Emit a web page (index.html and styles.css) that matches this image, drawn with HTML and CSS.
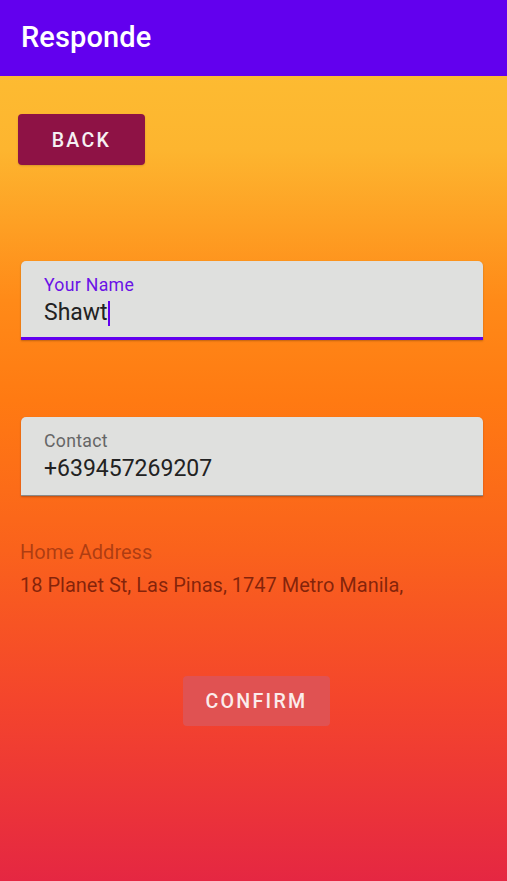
FILE: index.html
```html
<!DOCTYPE html>
<html>
<head>
<meta charset="utf-8">
<link rel="stylesheet" href="styles.css">
</head>
<body>
<header class="appbar"><h1 class="title">Responde</h1></header>
<main class="content">
  <button class="btn-back">BACK</button>
  <div class="field field-focused">
    <span class="field-label label-focused">Your Name</span>
    <span class="field-value">Shawt<span class="cursor"></span></span>
  </div>
  <div class="field field-idle">
    <span class="field-label">Contact</span>
    <span class="field-value">+639457269207</span>
  </div>
  <div class="address">
    <span class="address-label">Home Address</span>
    <span class="address-value">18 Planet St, Las Pinas, 1747 Metro Manila,</span>
  </div>
  <div class="confirm-row"><button class="btn-confirm">CONFIRM</button></div>
</main>
</body>
</html>
```
FILE: styles.css
```css
html, body {
  margin: 0;
  padding: 0;
  height: 100%;
}
body {
  font-family: Roboto, "Noto Sans", sans-serif;
  background: linear-gradient(to bottom, #fdc134 0px, #fdb52f 150px, #ff8a18 300px, #ff7a12 400px, #fa621c 550px, #f4452c 700px, #e52742 881px);
  min-height: 881px;
  display: flex;
  flex-direction: column;
}
.appbar {
  height: 76px;
  background: #6200ee;
  display: flex;
  align-items: center;
  padding-left: 21px;
  flex-shrink: 0;
}
.title {
  margin: 0;
  color: #ffffff;
  font-size: 29px;
  font-weight: 500;
  letter-spacing: 0.1px;
  position: relative;
  top: -1px;
}
.content {
  display: flex;
  flex-direction: column;
  align-items: flex-start;
  padding: 38px 24px 0 18px;
}
.btn-back {
  width: 127px;
  height: 51px;
  border: none;
  border-radius: 4px;
  background: #8e1245;
  color: #f6f0f3;
  font-family: Roboto, sans-serif;
  font-size: 19.6px;
  font-weight: 500;
  letter-spacing: 2.3px;
  padding: 1px 0 0 0;
  box-shadow: 0 1px 2px rgba(0,0,0,0.15);
}
.field {
  margin-left: 3px;
  width: 462px;
  height: 79px;
  box-sizing: border-box;
  background: #dfe0de;
  border-radius: 5px 5px 0 0;
  padding: 13px 0 0 23px;
  display: flex;
  flex-direction: column;
  box-shadow: 0 1px 2px rgba(0,0,0,0.25);
}
.field-focused {
  margin-top: 96px;
  border-bottom: 3px solid #6200ee;
}
.field-idle {
  margin-top: 77px;
  border-bottom: 1px solid #8a8a8a;
}
.field-label {
  font-size: 17.7px;
  line-height: 22px;
  color: #666666;
  letter-spacing: 0.3px;
}
.label-focused {
  color: #6a12e6;
}
.field-value {
  margin-top: 2px;
  font-size: 23px;
  line-height: 30px;
  color: #222222;
  display: flex;
  align-items: center;
}
.cursor {
  display: inline-block;
  width: 2.5px;
  height: 25px;
  background: #6200ee;
  margin-left: 0px;
}
.address {
  margin-top: 45px;
  margin-left: 2px;
  display: flex;
  flex-direction: column;
  gap: 10px;
}
.address-label {
  font-size: 20px;
  line-height: 22px;
  color: rgba(110, 30, 10, 0.55);
}
.address-value {
  font-size: 20px;
  line-height: 24px;
  color: rgba(100, 20, 5, 0.78);
}
.confirm-row {
  align-self: stretch;
  display: flex;
  justify-content: center;
  margin-top: 79px;
  padding-left: 12px;
}
.btn-confirm {
  width: 147px;
  height: 50px;
  border: none;
  border-radius: 4px;
  background: #e05252;
  color: #fbecec;
  font-family: Roboto, sans-serif;
  font-size: 19.6px;
  font-weight: 500;
  letter-spacing: 2.3px;
  padding: 0;
}
```
